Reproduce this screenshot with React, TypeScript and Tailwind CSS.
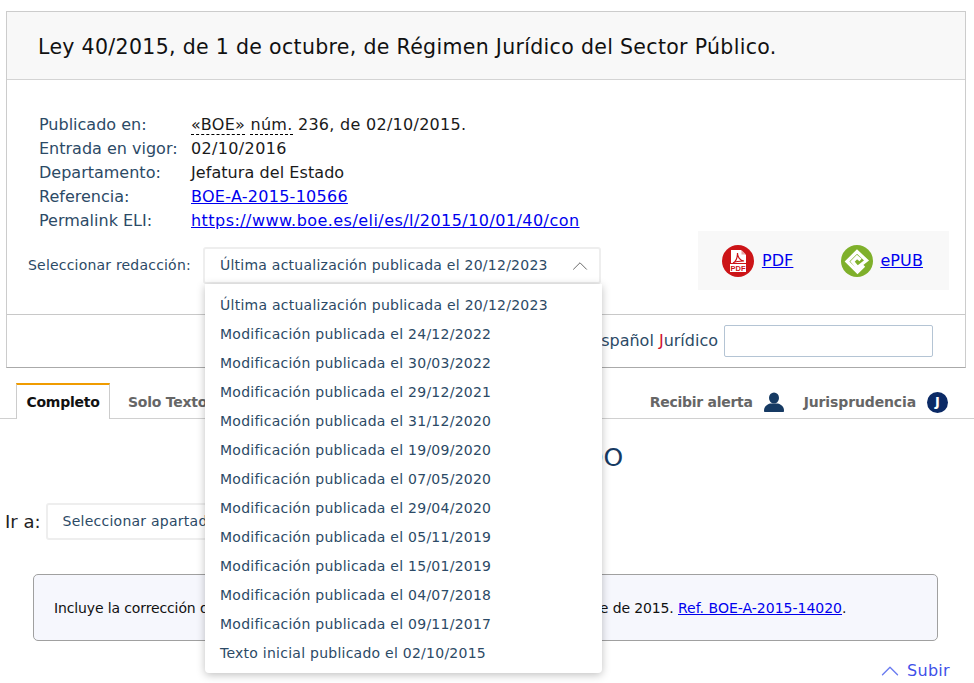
import React from 'react';
import { ChevronUp } from 'lucide-react';

const redacciones = [
  'Última actualización publicada el 20/12/2023',
  'Modificación publicada el 24/12/2022',
  'Modificación publicada el 30/03/2022',
  'Modificación publicada el 29/12/2021',
  'Modificación publicada el 31/12/2020',
  'Modificación publicada el 19/09/2020',
  'Modificación publicada el 07/05/2020',
  'Modificación publicada el 29/04/2020',
  'Modificación publicada el 05/11/2019',
  'Modificación publicada el 15/01/2019',
  'Modificación publicada el 04/07/2018',
  'Modificación publicada el 09/11/2017',
  'Texto inicial publicado el 02/10/2015',
];

const PdfIcon = () => (
  <svg width="32" height="32" viewBox="0 0 32 32">
    <circle cx="16" cy="16" r="16" fill="#cc1417" />
    <path d="M9 5h10l5 5v8H9z" fill="#fff" />
    <path d="M19.500 5l4.500 4.500h-4.500z" fill="#e9a5a6" />
    <path d="M11 18c3-1.500 4.500-5 4.500-10 0 4 2.500 7.500 6.500 8-4 0-8 0-11 2z" fill="none" stroke="#cc1417" strokeWidth="1.2" />
    <rect x="8" y="19" width="16" height="8" fill="#fff" />
    <text x="16" y="26" fontSize="7.500" fontWeight="700" fill="#cc1417" textAnchor="middle" fontFamily="Liberation Sans, sans-serif">PDF</text>
  </svg>
);

const EpubIcon = () => (
  <svg width="32" height="32" viewBox="0 0 32 32">
    <circle cx="16" cy="16" r="16" fill="#7fb02b" />
    <path d="M23 20.500L16.500 27 6 16.500 16 6.500 25.500 15.500 16.500 22.500 11.500 16.500 16 12 19.500 15" fill="none" stroke="#fff" strokeWidth="3.3" />
  </svg>
);

const MetaRow = ({ label, children }: { label: string; children: React.ReactNode }) => (
  <div className="flex h-6 items-center">
    <span className="w-[152px] text-[#2c4a66]">{label}</span>
    {children}
  </div>
);

export default function App() {
  return (
    <div className="relative h-[683px] w-[974px] overflow-hidden bg-white pt-[11px] font-['DejaVu_Sans',sans-serif] text-[16px]">
      <div className="ml-[6px] w-[960px] border border-[#cccccc] border-b-[#aaaaaa]">
        <div className="flex h-[68px] items-center border-b border-[#d4d4d4] bg-[#f8f8f8] pl-[31px] pt-[4px] text-[20.5px] tracking-[0.32px] text-[#111111]">
          Ley 40/2015, de 1 de octubre, de Régimen Jurídico del Sector Público.
        </div>
        <div className="h-[235px] border-b border-[#c8c8c8] pl-[32px] pt-[33px]">
          <MetaRow label="Publicado en:">
            <span className="tracking-[0.28px] text-[#1a1a1a]">
              <span className="border-b border-dashed border-black">«BOE»</span>{' '}
              <span className="border-b border-dashed border-black">núm.</span> 236, de 02/10/2015.
            </span>
          </MetaRow>
          <MetaRow label="Entrada en vigor:">
            <span className="tracking-[0.35px] text-[#1a1a1a]">02/10/2016</span>
          </MetaRow>
          <MetaRow label="Departamento:">
            <span className="tracking-[0.07px] text-[#1a1a1a]">Jefatura del Estado</span>
          </MetaRow>
          <MetaRow label="Referencia:">
            <a className="tracking-[0.27px] text-[#0000ee] underline">BOE-A-2015-10566</a>
          </MetaRow>
          <MetaRow label="Permalink ELI:">
            <a className="tracking-[0.45px] text-[#0000ee] underline">https://www.boe.es/eli/es/l/2015/10/01/40/con</a>
          </MetaRow>
          <div className="flex items-start">
            <div className="-ml-[11px] mt-[14px] flex h-[36px] items-center text-[14px] tracking-[0.2px] text-[#2c4a66]">Seleccionar redacción:</div>
            <div className="ml-[12px] mt-[14px] flex h-[37px] w-[398px] items-center justify-between rounded-[3px] border-2 border-[#eeeeee] bg-white pl-[15px] pr-[6px] text-[14px] tracking-[0.25px] text-[#2c4a66]">
              <span>Última actualización publicada el 20/12/2023</span>
              <ChevronUp size={26} strokeWidth={0.9} className="text-[#666666]" />
            </div>
            <div className="ml-[97px] mt-[-2px] flex h-[59px] w-[251px] items-center bg-[#f8f8f8] pl-[24px]">
              <PdfIcon />
              <a className="ml-[8px] tracking-[0.1px] text-[#0000ee] underline">PDF</a>
              <span className="ml-[48px]"><EpubIcon /></span>
              <a className="ml-[7px] tracking-[0.1px] text-[#0000ee] underline">ePUB</a>
            </div>
          </div>
        </div>
        <div className="flex h-[52px] items-center justify-end pr-[32px]">
          <span className="mr-[6px] text-[#2c4a66]">
            Diccionario del Español <span className="text-[#d01030]">J</span>urídico
          </span>
          <div className="h-[32px] w-[209px] rounded-[2px] border border-[#b4c4d4] bg-white" />
        </div>
      </div>

      <div className="mt-[15px] flex h-[36px] items-end justify-between border-b border-[#d0d0d0] pl-[16px] pr-[26px] text-[14px] font-bold">
        <div className="flex tracking-[-0.25px]">
          <div className="-mb-px flex h-[36px] w-[94px] items-center justify-center border-x border-t-2 border-x-[#cccccc] border-t-[#f09c00] bg-white text-[#111111]">Completo</div>
          <div className="flex h-[35px] items-center pl-[18px] pt-[3px] text-[#666666]">Solo Texto</div>
        </div>
        <div className="flex h-[35px] items-center pt-[3px] text-[#666666]">
          <span className="tracking-[-0.27px]">Recibir alerta</span>
          <svg className="ml-[11px]" width="20" height="20" viewBox="0 0 20 20">
            <ellipse cx="10" cy="6" rx="5" ry="5.500" fill="#163a63" />
            <path d="M0 19c0-4 2-6 6-7.500h8c4 1.500 6 3.500 6 7.500 0 .6-.5 1-1 1H1c-.5 0-1-.4-1-1z" fill="#163a63" />
          </svg>
          <span className="ml-[20px] tracking-[-0.13px]">Jurisprudencia</span>
          <span className="ml-[11px] flex h-[21px] w-[21px] items-center justify-center rounded-full bg-[#0b2a66] text-[13px] text-white">J</span>
        </div>
      </div>

      <h2 className="mt-[22px] h-[34px] pr-[6px] text-center text-[25px] leading-[34px] text-[#163a63]">TEXTO CONSOLIDADO</h2>

      <div className="mt-[28px] flex items-center pl-[5px]">
        <span className="text-[18px] text-[#222222]">Ir a:</span>
        <div className="ml-[5px] flex h-[37px] w-[300px] items-center rounded-[3px] border-2 border-[#eeeeee] pl-[15px] text-[14px] tracking-[0.25px] text-[#2c4a66]">Seleccionar apartado</div>
      </div>

      <div className="ml-[33px] mt-[34px] flex h-[67px] w-[905px] items-center rounded-[5px] border border-[#a0a0a0] bg-[#f6f7fd] pl-[20px] pt-[2px] text-[14px] text-[#111111]">
        <span className="whitespace-nowrap tracking-[-0.13px]">
          Incluye la corrección de errores publicada en BOE núm. 311, de 29 de diciembre de 2015.{' '}
          <a className="tracking-[0px] text-[#0000ee] underline">Ref. BOE-A-2015-14020</a>.
        </span>
      </div>

      <div className="mr-[24px] mt-[18px] flex h-6 items-center justify-end text-[#3f50e8]">
        <ChevronUp size={30} strokeWidth={1.1} className="mr-[2px] text-[#6a7cf0]" />
        <span className="tracking-[0.3px]">Subir</span>
      </div>

      {/* dropdown abierto */}
      <ul className="absolute left-[205px] top-[284px] w-[397px] rounded-b-[4px] bg-white pb-[5px] pt-[7px] text-[14px] tracking-[0.25px] text-[#2c4a66] shadow-[0_2px_8px_rgba(0,0,0,0.25)]">
        {redacciones.map((r) => (
          <li key={r} className="flex h-[29px] items-center pl-[15px]">{r}</li>
        ))}
      </ul>
    </div>
  );
}
